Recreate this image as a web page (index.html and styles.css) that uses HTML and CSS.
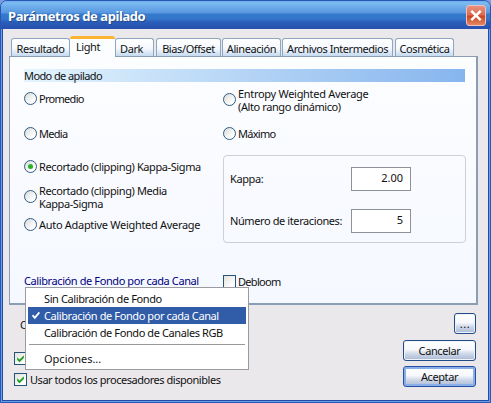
FILE: index.html
```
<!DOCTYPE html>
<html lang="es">
<head>
<meta charset="utf-8">
<title>Parámetros de apilado</title>
<link rel="stylesheet" href="styles.css">
</head>
<body>
<main class="window">
  <header class="titlebar">
    <h1>Parámetros de apilado</h1>
    <button class="close" aria-label="Cerrar"><svg width="18" height="19" viewBox="0 0 18 19"><path d="M4.3 4.8l9.4 9.4M13.7 4.8l-9.4 9.4" stroke="#fff" stroke-width="2.5"/></svg></button>
  </header>
  <div class="client">
    <nav class="tabs">
      <span class="tab t1">Resultado</span>
      <span class="tab t2 active">Light</span>
      <span class="tab t3">Dark</span>
      <span class="tab t4">Bias/Offset</span>
      <span class="tab t5">Alineación</span>
      <span class="tab t6">Archivos Intermedios</span>
      <span class="tab t7">Cosmética</span>
    </nav>
    <section class="panel">
      <h2 class="heading">Modo de apilado</h2>
      <div class="columns">
        <div class="left">
          <label class="option r1"><i class="radio"></i><span class="tight">Promedio</span></label>
          <label class="option r2"><i class="radio"></i><span class="tight">Media</span></label>
          <label class="option r3"><i class="radio on"></i><span>Recortado (clipping) Kappa-Sigma</span></label>
          <label class="option r4"><i class="radio"></i><span class="lines"><span>Recortado (clipping) Media</span><span>Kappa-Sigma</span></span></label>
          <label class="option r5"><i class="radio"></i><span class="wide">Auto Adaptive Weighted Average</span></label>
        </div>
        <div class="right">
          <label class="option e1"><i class="radio"></i><span class="lines"><span class="wide">Entropy Weighted Average</span><span>(Alto rango dinámico)</span></span></label>
          <label class="option e2"><i class="radio"></i><span class="tight">Máximo</span></label>
          <div class="group">
            <div class="field"><span>Kappa:</span><span class="input">2.00</span></div>
            <div class="field"><span>Número de iteraciones:</span><span class="input">5</span></div>
          </div>
        </div>
      </div>
      <div class="calibration">
        <span class="link">Calibración de Fondo por cada Canal</span>
        <label class="option"><i class="check"></i><span class="tight">Debloom</span></label>
      </div>
    </section>
    <footer class="footer">
      <div class="settings">
        <span class="covered">C</span>
        <label class="option"><i class="check"><svg width="11" height="11" viewBox="0 0 11 11"><path d="M2.2 4.2L4.5 6.6 8.9 2.2V5L4.5 9.3 2.2 7z" fill="#24a124"/></svg></i></label>
        <label class="option"><i class="check"><svg width="11" height="11" viewBox="0 0 11 11"><path d="M2.2 4.2L4.5 6.6 8.9 2.2V5L4.5 9.3 2.2 7z" fill="#24a124"/></svg></i><span class="cpu">Usar todos los procesadores disponibles</span></label>
      </div>
      <div class="buttons">
        <button class="button more">...</button>
        <button class="button">Cancelar</button>
        <button class="button default">Aceptar</button>
      </div>
    </footer>
  </div>
  <div class="menu">
    <div class="item"><span>Sin Calibración de Fondo</span></div>
    <div class="item selected"><svg width="8" height="9" viewBox="0 0 8 9"><path d="M.5 4.2L2.8 6.8 7.4 1.4" fill="none" stroke="#fff" stroke-width="1.8"/></svg><span>Calibración de Fondo por cada Canal</span></div>
    <div class="item"><span>Calibración de Fondo de Canales RGB</span></div>
    <hr>
    <div class="item last"><span>Opciones...</span></div>
  </div>
</main>
</body>
</html>
```
FILE: styles.css
```
* { box-sizing: border-box; }
body { margin: 0; background: #7c9de0; font: 11px/13px "Noto Sans", "Liberation Sans", sans-serif; letter-spacing: -0.4px; color: #111; white-space: nowrap; }
h1, h2 { margin: 0; font: inherit; }
button { font: inherit; letter-spacing: inherit; color: inherit; padding: 0; }
.window { position: relative; width: 491px; height: 403px; border-radius: 7px 7px 0 0; overflow: hidden; background: #6c9fe4; border: 1px solid #2856b8; }
.titlebar { height: 28px; padding: 3px 4px 0 7px; display: flex; justify-content: space-between; background: linear-gradient(#6facea 0, #7dbbf2 2px, #6cabea 6px, #5897df 12px, #3579cc 13px, #3477ca 18px, #2b5dba 21px, #2850ae 100%); color: #fff; }
.titlebar h1 { font: bold 13px/24px "Noto Sans", sans-serif; letter-spacing: -0.42px; text-shadow: 1px 1px #254986; }
.close { margin-top: 1px; width: 20px; height: 21px; border: 1px solid #f1c2bd; border-radius: 3px; background: linear-gradient(#e8917e, #d96b50 48%, #c94320 52%, #e48762); display: flex; }
.client { margin: 0 1px; height: 372px; border: 1px solid #214ba6; border-top: 0; background: #ebe8ec; padding: 7px 11px 0 6px; }
.tabs { height: 20px; display: flex; align-items: flex-end; padding-left: 2px; }
.tab { height: 18px; border: 1px solid #8fa6be; border-bottom: 0; border-radius: 3px 3px 0 0; background: linear-gradient(#fff, #f5f9fe 55%, #c5daf0); padding-top: 3px; text-align: center; margin-right: 2px; letter-spacing: -0.4px; }
.t1 { width: 59px; margin-right: 0; }
.t2 { width: 45px; margin-right: 0; }
.t3 { width: 39px; text-align: left; padding-left: 4px; }
.t4 { width: 65px; margin-right: 1px; }
.t5 { width: 59px; margin-right: 1px; }
.t6 { width: 111px; letter-spacing: -0.45px; }
.t7 { width: 59px; }
.tab.active { height: 21px; margin-bottom: -1px; background: #fcfdff; border-top: 3px solid #fbb431; border-left: 0; border-right: 0; padding: 1px 9px 0 0; }
.panel { width: 469px; height: 249px; border: 1px solid #8b9db2; border-right-width: 2px; border-bottom-width: 2px; background: linear-gradient(#fcfdff, #f5f8ff); padding: 12px 0 0 14px; }
.heading { width: 441px; height: 13px; background: linear-gradient(90deg, #e4f4fd, #86b5ee); letter-spacing: -0.6px; }
.columns { display: flex; height: 193px; }
.left { width: 199px; padding-top: 10px; }
.right { width: 243px; padding-top: 10px; }
.option { display: flex; align-items: center; gap: 2px; height: 13px; }
.lines { display: grid; grid-template-rows: 13px 13px; }
.wide { letter-spacing: -0.3px; }
.tight { letter-spacing: -0.7px; }
.radio { width: 13px; height: 13px; flex: none; border: 1px solid #315c83; border-radius: 50%; background: linear-gradient(135deg, #d7dad8, #fff 75%); display: grid; place-items: center; }
.on::after { content: ""; width: 5px; height: 5px; border-radius: 50%; background: #2ab126; }
.r2 { margin-top: 22px; }
.r3 { margin-top: 20px; }
.r4 { margin-top: 17px; }
.r5 { margin-top: 15px; }
.e1 { margin-top: 1px; }
.e2 { margin-top: 21px; }
.group { width: 243px; height: 88px; margin-top: 15px; padding: 11px 0 0 6px; border: 1px solid #ced0d8; border-radius: 4px; display: grid; gap: 18px; align-content: start; }
.field { display: grid; grid-template-columns: 121px 60px; align-items: center; }
.field > span:first-child { margin-bottom: 2px; }
.input { height: 24px; border: 1px solid #8d9199; background: #fff; text-align: right; padding: 3px 7px 0; letter-spacing: 0; }
.calibration { display: flex; height: 13px; }
.link { width: 199px; margin-top: -1px; color: #000080; }
.check { width: 13px; height: 13px; flex: none; border: 1px solid #245578; background: linear-gradient(135deg, #e1e1dc, #fff 80%); display: block; }
.check svg { display: block; }
.footer { display: flex; justify-content: space-between; }
.settings { padding: 13px 0 0 5px; }
.covered { display: block; padding-left: 6px; height: 34px; }
.settings .option + .option { margin-top: 8px; }
.cpu { margin-left: 1px; letter-spacing: -0.46px; }
.buttons { padding-top: 8px; margin-right: 1px; display: flex; flex-direction: column; align-items: flex-end; gap: 5px; }
.button { width: 73px; height: 21px; border: 1px solid #234d86; border-radius: 3px; background: linear-gradient(#fff, #f6f8fc 45%, #cbd5e6 70%, #a9b9d5); box-shadow: inset 0 0 0 1px #eef3fa; letter-spacing: -0.4px; }
.more { width: 22px; margin-bottom: 1px; letter-spacing: 0.6px; }
.button.default { border-color: #254fa0; box-shadow: inset 0 0 0 2px #8aaee8; }
.menu { position: absolute; left: 24px; top: 286px; width: 224px; height: 83px; background: #fff; border: 1px solid #999ba1; padding: 2px; }
.item { height: 17px; padding-left: 16px; display: flex; align-items: center; }
.item span { margin-top: -1px; }
.item.last { letter-spacing: 0; }
.item.selected { background: #315ca8; color: #fff; padding-left: 4px; gap: 4px; }
.menu hr { height: 1px; border: 0; background: #999; margin: 3px 1px 5px; }
```
